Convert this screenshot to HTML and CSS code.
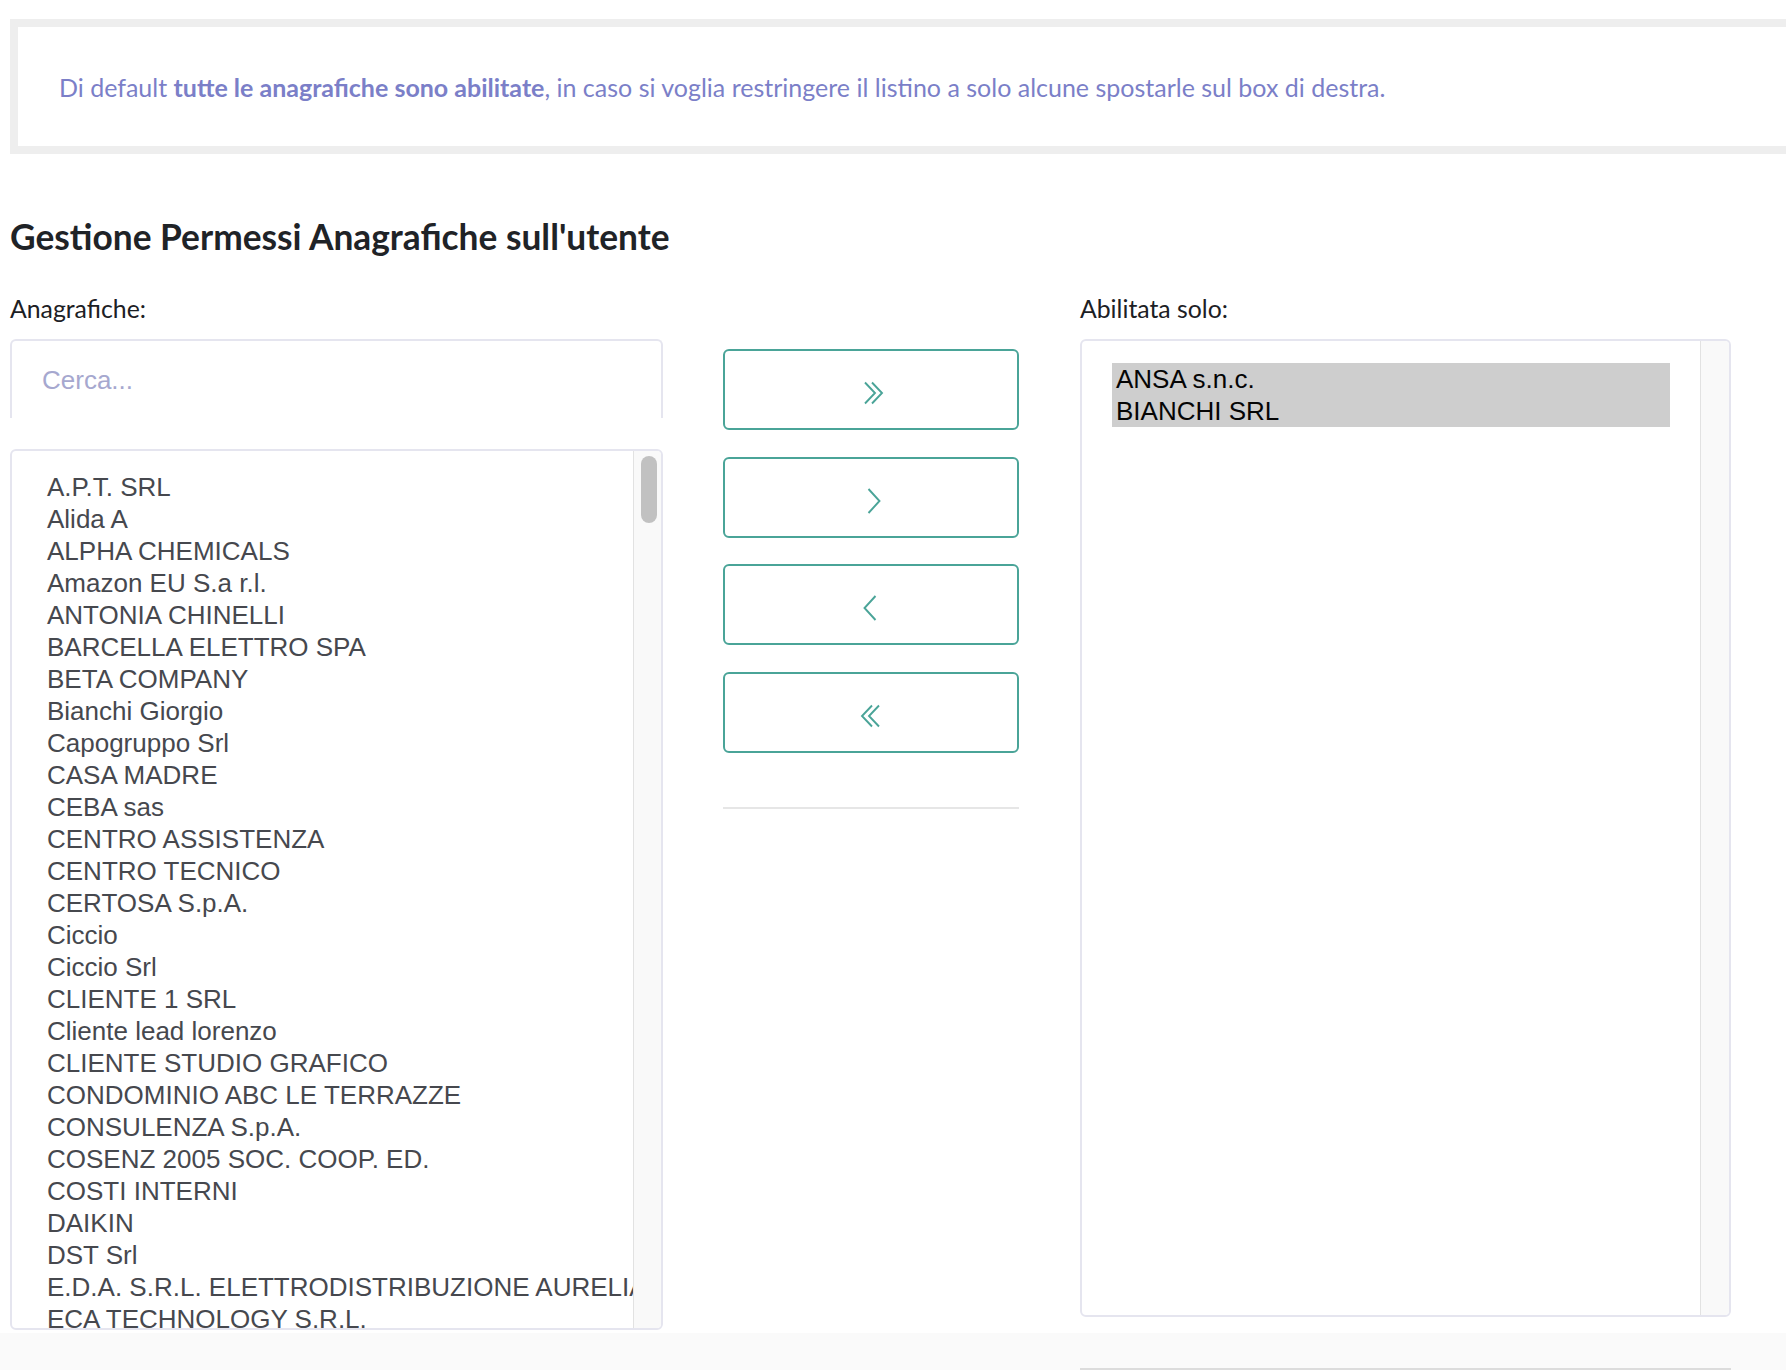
FILE: index.html
```html
<!DOCTYPE html>
<html lang="it">
<head>
<meta charset="utf-8">
<title>Gestione Permessi Anagrafiche</title>
<link rel="stylesheet" href="styles.css">
</head>
<body>
<div class="page">
  <div class="notice">
    <p>Di default <strong>tutte le anagrafiche sono abilitate</strong>, in caso si voglia restringere il listino a solo alcune spostarle sul box di destra.</p>
  </div>

  <h2 class="title">Gestione Permessi Anagrafiche sull'utente</h2>

  <div class="dual">
    <div class="col col-left">
      <div class="label">Anagrafiche:</div>
      <div class="search"><span class="placeholder">Cerca...</span></div>
      <div class="listbox listbox-left">
        <ul class="items">
          <li>A.P.T. SRL</li>
          <li>Alida A</li>
          <li>ALPHA CHEMICALS</li>
          <li>Amazon EU S.a r.l.</li>
          <li>ANTONIA CHINELLI</li>
          <li>BARCELLA ELETTRO SPA</li>
          <li>BETA COMPANY</li>
          <li>Bianchi Giorgio</li>
          <li>Capogruppo Srl</li>
          <li>CASA MADRE</li>
          <li>CEBA sas</li>
          <li>CENTRO ASSISTENZA</li>
          <li>CENTRO TECNICO</li>
          <li>CERTOSA S.p.A.</li>
          <li>Ciccio</li>
          <li>Ciccio Srl</li>
          <li>CLIENTE 1 SRL</li>
          <li>Cliente lead lorenzo</li>
          <li>CLIENTE STUDIO GRAFICO</li>
          <li>CONDOMINIO ABC LE TERRAZZE</li>
          <li>CONSULENZA S.p.A.</li>
          <li>COSENZ 2005 SOC. COOP. ED.</li>
          <li>COSTI INTERNI</li>
          <li>DAIKIN</li>
          <li>DST Srl</li>
          <li>E.D.A. S.R.L. ELETTRODISTRIBUZIONE AURELIA</li>
          <li>ECA TECHNOLOGY S.R.L.</li>
          <li>EDIL COSTRUZIONI SRL</li>
        </ul>
        <div class="track"><div class="thumb"></div></div>
      </div>
    </div>

    <div class="col col-mid">
      <button class="move move-right" type="button" aria-label="Sposta tutti a destra">
        <svg width="22" height="24" viewBox="0 0 22 24"><polyline points="2,1.5 12,12 2,22.5"/><polyline points="9,1.5 19,12 9,22.5"/></svg>
      </button>
      <button class="move move-right" type="button" aria-label="Sposta a destra">
        <svg width="14" height="26" viewBox="0 0 14 26"><polyline points="1.5,1 12.5,13 1.5,25"/></svg>
      </button>
      <button class="move move-left" type="button" aria-label="Sposta a sinistra">
        <svg width="14" height="26" viewBox="0 0 14 26"><polyline points="12.5,1 1.5,13 12.5,25"/></svg>
      </button>
      <button class="move move-left" type="button" aria-label="Sposta tutti a sinistra">
        <svg width="22" height="24" viewBox="0 0 22 24"><polyline points="20,1.5 10,12 20,22.5"/><polyline points="13,1.5 3,12 13,22.5"/></svg>
      </button>
      <hr class="divider">
    </div>

    <div class="col col-right">
      <div class="label">Abilitata solo:</div>
      <div class="listbox listbox-right">
        <ul class="items">
          <li class="selected">ANSA s.n.c.</li>
          <li class="selected">BIANCHI SRL</li>
        </ul>
        <div class="track"></div>
      </div>
    </div>
  </div>
</div>
<div class="footer">
  <div class="footer-line"></div>
</div>
</body>
</html>
```

FILE: styles.css
```css
html, body {
  margin: 0;
  padding: 0;
}
body {
  background: #fafafa;
  overflow: hidden;
  height: 1370px;
  display: flex;
  flex-direction: column;
}
.page {
  flex: none;
  background: #ffffff;
  padding: 19px 0 3px 10px;
}
.notice {
  border: 8px solid #eeeeee;
  border-right: none;
  height: 119px;
  display: flex;
  align-items: center;
  padding-left: 41px;
}
.notice p {
  margin: 0;
  font-family: "Lato", sans-serif;
  font-size: 25px;
  color: #7b7fc8;
}
.notice strong {
  font-weight: 700;
}
.title {
  margin: 62px 0 0 0;
  font-family: "Lato", sans-serif;
  font-weight: 700;
  font-size: 35.3px;
  line-height: 42px;
  color: #1f2327;
}
.dual {
  display: grid;
  grid-template-columns: 653px 296px 652px;
  column-gap: 60px;
  margin-top: 36px;
}
.col-right {
  margin-left: 1px;
}
.label {
  font-family: "Lato", sans-serif;
  font-size: 24.8px;
  line-height: 30px;
  color: #1c2024;
  margin-bottom: 15px;
}
.search {
  height: 77px;
  border: 2px solid #e5e5ef;
  border-bottom: none;
  border-radius: 6px 6px 0 0;
  display: flex;
  align-items: center;
  padding-left: 30px;
}
.placeholder {
  font-family: "Liberation Sans", Arial, sans-serif;
  font-size: 26px;
  color: #a6a8cf;
  margin-top: 1px;
}
.listbox {
  border: 2px solid #e5e5ef;
  border-radius: 6px;
  display: flex;
  overflow: hidden;
}
.listbox-left {
  margin-top: 31px;
  height: 877px;
}
.listbox-right {
  height: 974px;
}
.items {
  list-style: none;
  margin: 0;
  padding: 20px 31px 0 31px;
  flex: 1;
  min-width: 0;
  overflow: hidden;
}
.listbox-left .items {
  padding-right: 0;
}
.listbox-right .items {
  padding: 22px 30px 0 30px;
}
.items li {
  font-family: "Liberation Sans", Arial, sans-serif;
  font-size: 26px;
  line-height: 32px;
  height: 32px;
  padding-left: 4px;
  color: #46484e;
  white-space: nowrap;
}
.items li.selected {
  background: #cecece;
  color: #050505;
}
.track {
  width: 28px;
  flex: none;
  background: #f9f9f9;
  border-left: 1px solid #e2e2e2;
  padding-top: 5px;
  box-sizing: border-box;
  display: flex;
  justify-content: center;
}
.listbox-right .track {
  width: 29px;
}
.thumb {
  width: 16px;
  height: 67px;
  border-radius: 8px;
  background: #c1c1c1;
  margin-left: 2px;
}
.col-mid {
  padding-top: 55px;
  display: flex;
  flex-direction: column;
}
.move {
  height: 81px;
  margin: 0 0 26.5px 0;
  border: 2px solid #4aa498;
  border-radius: 6px;
  background: #ffffff;
  display: flex;
  align-items: center;
  justify-content: center;
  padding: 0;
  cursor: pointer;
}
.move svg {
  fill: none;
  stroke: #4aa498;
  stroke-width: 1.9;
  margin-top: 7px;
}
.move-right svg {
  margin-left: 5px;
}
.move-left svg {
  margin-left: -3px;
}
.divider {
  margin: 28px 0 0 0;
  border: none;
  height: 2px;
  background: #e6e6e6;
}
.footer {
  flex: 1;
  padding-left: 1080px;
  display: flex;
  align-items: flex-end;
}
.footer-line {
  width: 651px;
  height: 2px;
  background: #dcdcdc;
}
```
